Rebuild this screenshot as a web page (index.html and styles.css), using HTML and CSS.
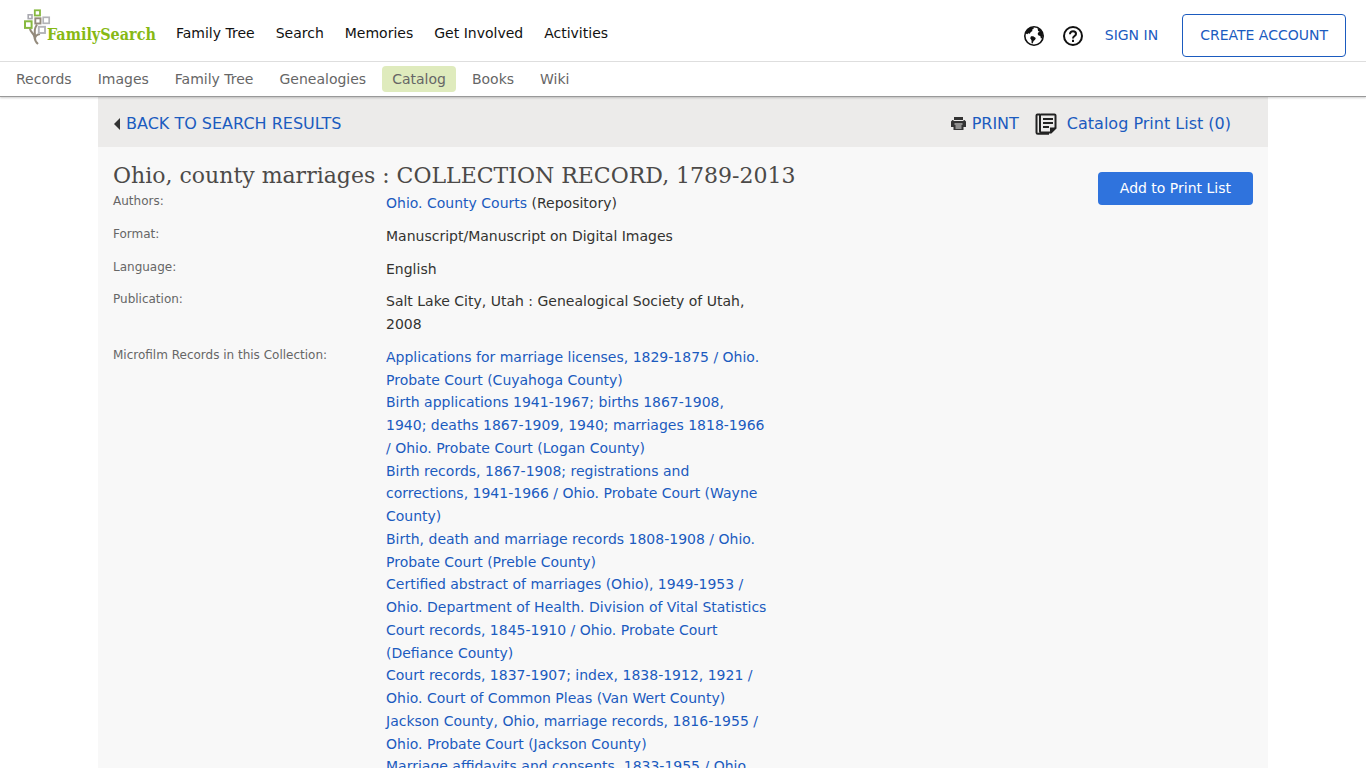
FILE: index.html
```html
<!DOCTYPE html>
<html lang="en">
<head>
<meta charset="utf-8">
<title>Ohio, county marriages : COLLECTION RECORD, 1789-2013</title>
<link rel="stylesheet" href="styles.css">
</head>
<body>
<header class="site-header">
  <div class="top-bar">
    <a class="logo" href="#">
      <svg class="logo-tree" width="28" height="36" viewBox="0 0 28 36" fill="none" aria-hidden="true">
        <path d="M7 19.500c.5 4.500 4 4.500 4.500 8.500.3 3 1 5 3.500 7" stroke="#938a7c" stroke-width="2.200"/>
        <path d="M14 15.500c-2.500 4-2.500 6-2 11M17 25c-3 .5-5 1.500-5 5" stroke="#938a7c" stroke-width="2"/>
        <rect x="11.800" y="1.300" width="5.200" height="5.200" stroke="#87b940" stroke-width="1.800"/>
        <rect x="5.200" y="5.800" width="3.800" height="3.800" stroke="#a9a9b0" stroke-width="1.600"/>
        <rect x="12.300" y="9.300" width="5.200" height="5.200" stroke="#938a7c" stroke-width="1.900"/>
        <rect x="20.200" y="8.300" width="6" height="6" stroke="#b4b4b8" stroke-width="1.700"/>
        <rect x="2" y="12.300" width="6.600" height="6.600" stroke="#87b940" stroke-width="2"/>
        <rect x="15.800" y="17.800" width="6.200" height="6.200" stroke="#b4b4b8" stroke-width="1.900"/>
      </svg>
      <span class="logo-name">FamilySearch</span>
    </a>
    <nav class="main-nav" aria-label="Main">
      <a href="#">Family Tree</a>
      <a href="#">Search</a>
      <a href="#">Memories</a>
      <a href="#">Get Involved</a>
      <a href="#">Activities</a>
    </nav>
    <div class="account">
      <button class="icon-button" type="button" aria-label="Language">
        <svg width="22" height="22" viewBox="0 0 22 22" aria-hidden="true">
          <circle cx="11" cy="11" r="9.200" fill="#fff" stroke="#111" stroke-width="1.600"/>
          <path d="M2.200 8.500 4.500 4 8.500 2l2.500.4-.6 1.500-1.400.8.500 1.400-1.700 1-1 1.600-1.600-.4-.8.900-1.200-.4z" fill="#111"/>
          <path d="M8 11.200h2.200l2.600 1.700-.7 1.900-1.500 1.100-1 2.600-1-.3-.1-2.900-1.300-2.100z" fill="#111"/>
          <path d="m14.500 3 2.300 1 2.400 3 .8 3.500-1 2.700-1.100.4-.6-2.600-1.700-.4-1-1.600.8-1.700 1.300-.5-1.600-.9z" fill="#111"/>
        </svg>
      </button>
      <button class="icon-button" type="button" aria-label="Help">
        <svg width="22" height="22" viewBox="0 0 22 22" fill="none" stroke="#111" stroke-width="2" aria-hidden="true">
          <circle cx="11" cy="11" r="9"/>
          <path d="M8 9.200c0-1.900 1.300-3 3-3s3 1.100 3 2.700c0 2-3 2.300-3 4.500M11 14.800v2.200"/>
        </svg>
      </button>
      <a class="sign-in" href="#">SIGN IN</a>
      <a class="create-account" href="#">CREATE ACCOUNT</a>
    </div>
  </div>
  <nav class="sub-nav" aria-label="Search">
    <a href="#">Records</a>
    <a href="#">Images</a>
    <a href="#">Family Tree</a>
    <a href="#">Genealogies</a>
    <a class="current" href="#" aria-current="page">Catalog</a>
    <a href="#">Books</a>
    <a href="#">Wiki</a>
  </nav>
</header>
<main class="page">
  <div class="toolbar">
    <a class="back" href="#">
      <svg width="6" height="12" viewBox="0 0 6 12" aria-hidden="true"><path d="M6 0v12L0 6z" fill="#333"/></svg>
      BACK TO SEARCH RESULTS
    </a>
    <div class="tools">
      <a class="print" href="#">
        <svg width="15" height="13" viewBox="0 0 15 13" aria-hidden="true">
          <path d="M3 0h9v3h1.500L15 4.500V10h-2.500v3h-10v-3H0V4.500L1.500 3H3z" fill="#333"/>
          <path d="M2.500 3.500h10M3.500 7h8" stroke="#ecebea"/>
          <path d="M4.500 9h6M4.500 11h6" stroke="#ecebea"/>
        </svg>
        PRINT
      </a>
      <a class="print-list" href="#">
        <svg width="22" height="22" viewBox="0 0 22 22" fill="none" stroke="#222" stroke-width="2" aria-hidden="true">
          <path d="M6 1.500h13.500q1 0 1 1V15L16 19.500H6q-1 0-1-1v-16q0-1 1-1z"/>
          <path d="M5 1.500H2.500Q1.500 1.500 1.500 2.500v17q0 1.300 1.300 1.300H14M8 6h10M8 10h10M8 14h6"/>
          <path d="M15 20.500v-6h6z" fill="#222" stroke="none"/>
        </svg>
        Catalog Print List (0)
      </a>
    </div>
  </div>
  <div class="record">
    <div class="record-main">
      <h1>Ohio, county marriages : COLLECTION RECORD, 1789-2013</h1>
      <dl class="details">
        <dt>Authors:</dt>
        <dd><a href="#">Ohio. County Courts</a> (Repository)</dd>
        <dt>Format:</dt>
        <dd>Manuscript/Manuscript on Digital Images</dd>
        <dt>Language:</dt>
        <dd>English</dd>
        <dt>Publication:</dt>
        <dd>Salt Lake City, Utah : Genealogical Society of Utah, 2008</dd>
        <dt>Microfilm Records in this Collection:</dt>
        <dd>
          <ul class="films">
            <li><a href="#">Applications for marriage licenses, 1829-1875 / Ohio. Probate Court (Cuyahoga County)</a></li>
            <li><a href="#">Birth applications 1941-1967; births 1867-1908, 1940;&nbsp;deaths 1867-1909, 1940; marriages 1818-1966 /&nbsp;Ohio. Probate Court (Logan County)</a></li>
            <li><a href="#">Birth records, 1867-1908; registrations and corrections, 1941-1966 / Ohio. Probate Court (Wayne County)</a></li>
            <li><a href="#">Birth, death and marriage records 1808-1908 / Ohio. Probate Court (Preble County)</a></li>
            <li><a href="#">Certified abstract of marriages (Ohio), 1949-1953 / Ohio. Department of Health. Division of Vital Statistics</a></li>
            <li><a href="#">Court records, 1845-1910 / Ohio. Probate Court (Defiance County)</a></li>
            <li><a href="#">Court records, 1837-1907; index, 1838-1912, 1921 / Ohio. Court of Common Pleas (Van Wert County)</a></li>
            <li><a href="#">Jackson County, Ohio, marriage records, 1816-1955 / Ohio. Probate Court (Jackson County)</a></li>
            <li><a href="#">Marriage affidavits and consents, 1833-1955 / Ohio.</a></li>
          </ul>
        </dd>
      </dl>
    </div>
    <button class="add" type="button">Add to Print List</button>
  </div>
</main>
</body>
</html>
```
FILE: styles.css
```css
* {
  box-sizing: border-box;
}

html {
  height: 100%;
  overflow: hidden;
}

body {
  margin: 0;
  height: 100%;
  overflow: hidden;
  background: #fff;
  color: #333331;
  font: 14px/1.625 Verdana, "DejaVu Sans", sans-serif;
}

a {
  color: #1b5bbf;
  text-decoration: none;
}

svg {
  flex: none;
}

.site-header {
  position: relative;
  background: #fff;
  border-bottom: 1px solid #999;
  box-shadow: 0 1px 2px rgba(0, 0, 0, 0.2);
}

.top-bar {
  display: flex;
  align-items: center;
  height: 62px;
  padding: 0 20px 0 23px;
  border-bottom: 1px solid #dedede;
}

.logo {
  display: flex;
  align-items: flex-end;
  width: 133px;
  margin: 0 20px 8px 0;
}

.logo-name {
  margin-left: -4px;
  color: #87b914;
  font: bold 16px/20px "DejaVu Serif Condensed", "DejaVu Serif", serif;
}

.main-nav {
  display: flex;
  gap: 21px;
  padding-top: 6px;
}

.main-nav a {
  color: #111;
}

.account {
  display: flex;
  align-items: center;
  margin-left: auto;
  padding-top: 10px;
}

.icon-button {
  display: flex;
  margin-right: 17px;
  padding: 0;
  border: 0;
  background: none;
}

.sign-in {
  margin: 0 24px 0 4px;
}

.create-account {
  padding: 9px 17px;
  border: 1px solid #1b5bbf;
  border-radius: 4px;
}

.sub-nav {
  display: flex;
  align-items: center;
  gap: 6px;
  height: 34px;
  padding: 0 6px;
}

.sub-nav a {
  padding: 2px 10px;
  border-radius: 4px;
  color: #666;
}

.sub-nav .current {
  background: #dfebbd;
}

.page {
  max-width: 1170px;
  min-height: 100%;
  margin: 0 auto;
  background: #f8f8f8;
}

.toolbar {
  display: flex;
  align-items: center;
  justify-content: space-between;
  height: 50px;
  padding: 3px 37px 0 16px;
  background: #ecebea;
  font-size: 16px;
}

.toolbar a,
.tools {
  display: flex;
  align-items: center;
}

.back {
  gap: 6px;
}

.print {
  gap: 6px;
}

.tools {
  gap: 16px;
}

.print-list {
  gap: 10px;
}

.record {
  display: flex;
  align-items: flex-start;
  justify-content: space-between;
  padding: 14px 15px 0;
}

.record-main {
  flex: 1;
}

h1 {
  margin: 0;
  color: #4c4a48;
  font: 22px/30px "DejaVu Serif", serif;
}

.details {
  display: grid;
  grid-template-columns: 273px 388px;
  row-gap: 10px;
  margin: 1px 0 0;
}

.details dt {
  color: #666;
  font-size: 12px;
}

.details dd {
  margin: 0;
}

.films {
  margin: 0;
  padding: 0;
  list-style: none;
}

.add {
  margin-top: 11px;
  padding: 0 22px;
  border: 0;
  border-radius: 4px;
  background: #2f73dd;
  color: #fff;
  font: 14px/33px Verdana, "DejaVu Sans", sans-serif;
}
```
